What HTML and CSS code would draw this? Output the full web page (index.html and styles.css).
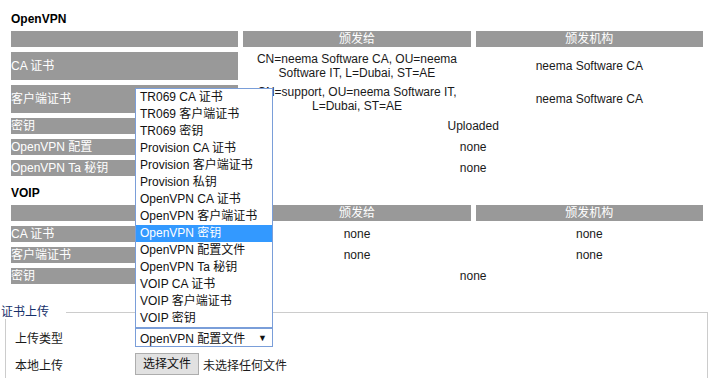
FILE: index.html
```html
<!DOCTYPE html>
<html lang="zh">
<head>
<meta charset="utf-8">
<title>证书</title>
<link rel="stylesheet" href="styles.css">
</head>
<body>
<div class="sec first">OpenVPN</div>
<table class="cert">
  <tr><th></th><th>颁发给</th><th>颁发机构</th></tr>
  <tr><td class="lbl">CA 证书</td><td>CN=neema Software CA, OU=neema Software IT, L=Dubai, ST=AE</td><td>neema Software CA</td></tr>
  <tr><td class="lbl">客户端证书</td><td>CN=support, OU=neema Software IT, L=Dubai, ST=AE</td><td>neema Software CA</td></tr>
  <tr><td class="lbl">密钥</td><td colspan="2">Uploaded</td></tr>
  <tr><td class="lbl">OpenVPN 配置</td><td colspan="2">none</td></tr>
  <tr><td class="lbl">OpenVPN Ta 秘钥</td><td colspan="2">none</td></tr>
</table>
<div class="sec">VOIP</div>
<table class="cert">
  <tr><th></th><th>颁发给</th><th>颁发机构</th></tr>
  <tr><td class="lbl">CA 证书</td><td>none</td><td>none</td></tr>
  <tr><td class="lbl">客户端证书</td><td>none</td><td>none</td></tr>
  <tr><td class="lbl">密钥</td><td colspan="2">none</td></tr>
</table>
<fieldset class="upload">
  <legend>证书上传</legend>
  <div class="form">
    <div class="flabel">上传类型</div>
    <div class="select-wrap">
      <div class="select"><span>OpenVPN 配置文件</span><span class="arrow">▼</span></div>
      <ul class="list">
        <li>TR069 CA 证书</li>
        <li>TR069 客户端证书</li>
        <li>TR069 密钥</li>
        <li>Provision CA 证书</li>
        <li>Provision 客户端证书</li>
        <li>Provision 私钥</li>
        <li>OpenVPN CA 证书</li>
        <li>OpenVPN 客户端证书</li>
        <li class="active">OpenVPN 密钥</li>
        <li>OpenVPN 配置文件</li>
        <li>OpenVPN Ta 秘钥</li>
        <li>VOIP CA 证书</li>
        <li>VOIP 客户端证书</li>
        <li>VOIP 密钥</li>
      </ul>
    </div>
    <div class="flabel">本地上传</div>
    <div class="file"><span class="btn">选择文件</span><span>未选择任何文件</span></div>
  </div>
</fieldset>
</body>
</html>
```
FILE: styles.css
```css
body {
  margin: 0;
  font-family: "Liberation Sans", "Noto Sans CJK SC", sans-serif;
  font-size: 12px;
  color: #1a1a1a;
  background: #fff;
}
.sec {
  font-weight: bold;
  color: #000;
  line-height: 14px;
  padding-left: 11px;
  margin-top: 5px;
}
.sec.first {
  margin-top: 12px;
}
.cert {
  table-layout: fixed;
  width: 702px;
  margin-left: 6px;
  border-spacing: 5px;
  border-collapse: separate;
}
.cert th {
  background: #999;
  color: #fff;
  font-weight: normal;
  line-height: 14px;
  padding: 1px 0;
  text-align: center;
}
.cert td {
  line-height: 14px;
  padding: 0;
  text-align: center;
  vertical-align: middle;
}
.cert td.lbl {
  background: #999;
  color: #fff;
  text-align: left;
  padding: 1px 0;
  white-space: nowrap;
}
.upload {
  margin: 16px 4px 0 5px;
  padding: 9px 9px 10px 9px;
  border: 1px solid #ccc;
  border-bottom: none;
}
.upload legend {
  margin-left: -14px;
  padding: 0 17px 0 0;
  line-height: 14px;
  color: #16306a;
}
.form {
  display: grid;
  grid-template-columns: 120px auto;
  row-gap: 6px;
  align-items: center;
}
.select-wrap {
  position: relative;
  width: 138px;
}
.select {
  box-sizing: border-box;
  height: 19px;
  border: 1px solid #7a9ed9;
  display: flex;
  align-items: center;
  justify-content: space-between;
  padding: 0 5px 0 4px;
  color: #111;
}
.arrow {
  font-size: 9px;
  color: #111;
}
.list {
  position: absolute;
  left: 0;
  bottom: 100%;
  box-sizing: border-box;
  width: 138px;
  margin: 0;
  padding: 0;
  list-style: none;
  background: #fff;
  border: 1px solid #7a9ed9;
  z-index: 5;
}
.list li {
  height: 17px;
  line-height: 17px;
  padding-left: 4px;
  color: #111;
  white-space: nowrap;
}
.list li.active {
  background: #3399ff;
  color: #fff;
}
.file {
  display: flex;
  align-items: center;
  gap: 4px;
}
.btn {
  box-sizing: border-box;
  width: 64px;
  height: 22px;
  line-height: 20px;
  text-align: center;
  background: #e1e1e1;
  border: 1px solid #adadad;
  color: #111;
}
```
